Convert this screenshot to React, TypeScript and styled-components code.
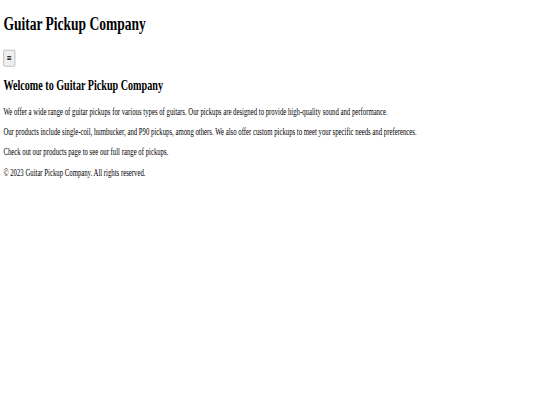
import React from "react";
import styled, { createGlobalStyle } from "styled-components";

// the reference is a 1280px wide page squeezed into 540x405
const SCALE_X = 540 / 1280;
const SCALE_Y = 0.6;

const GlobalStyle = createGlobalStyle`
  html, body {
    margin: 0;
    padding: 0;
    background: #ffffff;
    overflow: hidden;
  }
  body {
    width: 540px;
    height: 405px;
  }
`;

const Page = styled.div<{ $sx: number; $sy: number }>`
  width: 1280px;
  padding: 8px;
  box-sizing: border-box;
  font-family: "Liberation Serif", "Times New Roman", serif;
  color: #000000;
  transform: scale(${({ $sx }) => $sx}, ${({ $sy }) => $sy});
  transform-origin: top left;
`;

const Header = styled.header`
  display: flex;
  flex-direction: column;
  align-items: flex-start;
`;

const Title = styled.h1`
  font-size: 32px;
  font-weight: bold;
  margin: 13px 0 24.7px;
`;

const Nav = styled.nav`
  display: flex;
`;

const MenuButton = styled.button`
  width: 28px;
  height: 28px;
  padding: 0;
  display: flex;
  align-items: center;
  justify-content: center;
  font-family: "DejaVu Sans", sans-serif;
  font-size: 15px;
  color: #000000;
  background: #efefef;
  border: 1.5px solid #8f8f8f;
  border-radius: 3px;
`;

const Main = styled.main`
  display: flex;
  flex-direction: column;
`;

const Heading = styled.h2`
  font-size: 24px;
  font-weight: bold;
  margin: 18px 0 21.3px;
`;

const Text = styled.p`
  font-size: 16px;
  margin: 0 0 16px;
`;

const Footer = styled.footer`
  display: flex;
`;

export default function App() {
  return (
    <>
      <GlobalStyle />
      <Page $sx={SCALE_X} $sy={SCALE_Y}>
        <Header>
          <Title>Guitar Pickup Company</Title>
          <Nav>
            <MenuButton aria-label="Menu">≡</MenuButton>
          </Nav>
        </Header>
        <Main>
          <Heading>Welcome to Guitar Pickup Company</Heading>
          <Text>
            We offer a wide range of guitar pickups for various types of guitars. Our pickups are
            designed to provide high-quality sound and performance.
          </Text>
          <Text>
            Our products include single-coil, humbucker, and P90 pickups, among others. We also
            offer custom pickups to meet your specific needs and preferences.
          </Text>
          <Text>Check out our products page to see our full range of pickups.</Text>
        </Main>
        <Footer>
          <Text>© 2023 Guitar Pickup Company. All rights reserved.</Text>
        </Footer>
      </Page>
    </>
  );
}
